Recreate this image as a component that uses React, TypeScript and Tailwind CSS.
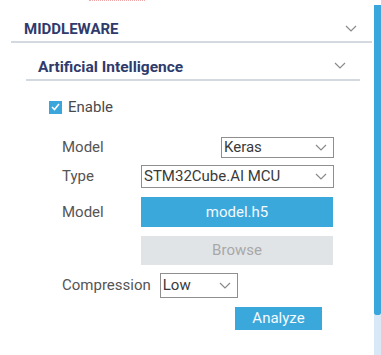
import { useState } from "react"

const Chevron = ({ className = "" }: { className?: string }) => (
  <svg className={className} width="12" height="7" viewBox="0 0 12 7" fill="none">
    <polyline points="1,1 6,6 11,1" stroke="#8a8a8a" strokeWidth="1.2" />
  </svg>
)

const Select = ({ value, className }: { value: string; className: string }) => (
  <div className={`flex items-center justify-between border border-[#8f8f8f] bg-white pl-[2px] pr-[6px] text-[15px] text-[#3a3a3a] ${className}`}>
    <span>{value}</span>
    <Chevron />
  </div>
)

const App = () => {
  const [enabled, setEnabled] = useState<boolean>(true)
  return <>
    <div className="flex w-[381px] h-[355px] bg-white overflow-hidden" style={{ fontFamily: "Roboto, 'Liberation Sans', sans-serif" }}>
      <section className="w-[374px] flex flex-col">
        <div className="ml-[89px] w-[56px] border-t border-dotted border-[#f2a8a8]"></div>
        <div className="ml-[11px] w-[361px] h-[42px] flex items-end justify-between pl-[13px] pr-[15px] pb-[3px] border-b-2 border-[#d3d9df]">
          <div className="font-bold text-[15px] leading-[18px] text-[#2f3b6b]">MIDDLEWARE</div>
          <Chevron className="mb-[6px]" />
        </div>
        <div className="ml-[26px] w-[334px] h-[38px] flex items-end justify-between pl-[12px] pr-[14px] pb-[3px] border-b-2 border-[#d3d9df]">
          <div className="font-bold text-[15.5px] leading-[18px] text-[#2f3b6b]">Artificial Intelligence</div>
          <Chevron className="mb-[7px]" />
        </div>
        <div className="mt-[15px] ml-[49px] flex items-center gap-[6px] cursor-pointer" onClick={() => setEnabled(!enabled)}>
          <div className={`w-[13px] h-[13px] flex items-center justify-center ${enabled ? 'bg-[#3ba6dc]' : 'border border-[#8f8f8f]'}`}>
            {enabled && <svg width="9" height="8" viewBox="0 0 9 8" fill="none"><polyline points="1,4 3.5,6.5 8,1" stroke="white" strokeWidth="1.6" /></svg>}
          </div>
          <span className="text-[15px] leading-[22px] text-[#4a4a4a]">Enable</span>
        </div>
        <div className="ml-[62px] w-[272px] flex flex-col text-[15px] text-[#555]">
          <div className="mt-[19px] h-[21px] flex items-center justify-between">
            <span>Model</span>
            <Select value="Keras" className="w-[113px] h-[21px]" />
          </div>
          <div className="mt-[7px] h-[23px] flex items-center justify-between">
            <span>Type</span>
            <Select value="STM32Cube.AI MCU" className="w-[193px] h-[23px]" />
          </div>
          <div className="mt-[9px] h-[30px] flex items-center justify-between">
            <span>Model</span>
            <button className="w-[192px] h-[30px] bg-[#3ba8dc] text-[#f4fafd] text-[15px] mr-px">model.h5</button>
          </div>
          <div className="mt-[9px] h-[29px] flex justify-end">
            <button className="w-[192px] h-[29px] bg-[#e1e4e7] text-[#a8a8a8] text-[15px] mr-px">Browse</button>
          </div>
          <div className="mt-[8px] h-[25px] flex items-center gap-[9px]">
            <span>Compression</span>
            <Select value="Low" className="w-[78px] h-[25px]" />
          </div>
          <div className="mt-[9px] h-[23px] flex justify-end pr-[12px]">
            <button className="w-[87px] h-[23px] bg-[#3ba8dc] text-[#f4fafd] text-[15px]">Analyze</button>
          </div>
        </div>
      </section>
      <aside className="w-[7px] flex flex-col">
        <div className="h-[5px]"></div>
        <div className="h-[310px] bg-[#39a7dc] rounded-b-[2px]"></div>
        <div className="flex-1 bg-[#d8e8f6]"></div>
      </aside>
    </div>
  </>
}

export default App
